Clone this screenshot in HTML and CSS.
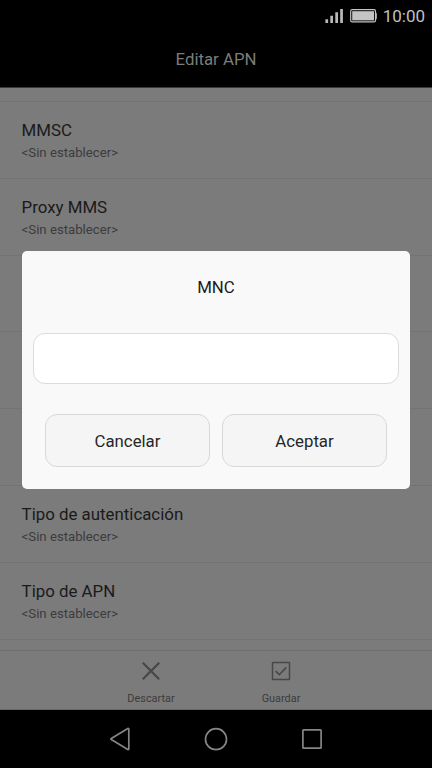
FILE: index.html
```html
<!DOCTYPE html>
<html lang="es">
<head>
<meta charset="utf-8">
<title>Editar APN</title>
<link rel="stylesheet" href="styles.css">
</head>
<body>
<div class="phone">
  <div class="statusbar">
    <svg class="signal" width="18" height="16" viewBox="0 0 18 16"><path d="M.4 11.200h2.700V15H.4zM5.300 7.800H8V15H5.300zM10.300 4.200H13V15h-2.700zM15.200 1h2.700v14h-2.700z"/></svg>
    <svg class="battery" width="28" height="14" viewBox="0 0 28 14"><rect x=".7" y=".7" width="24.800" height="12.200" rx="1.500" fill="none" stroke="#c4c4c4" stroke-width="1.200"/><rect x="2.200" y="2.200" width="21.800" height="9.200" fill="#c4c4c4"/><path d="M25.500 3.500q1.300 0 1.300 1.500v4q0 1.500-1.300 1.500z" fill="#c4c4c4"/></svg>
    <span class="clock">10:00</span>
  </div>
  <header class="header">Editar APN</header>
  <main class="list">
    <div class="row"><div class="name">MMSC</div><div class="value">&lt;Sin establecer&gt;</div></div>
    <div class="row"><div class="name">Proxy MMS</div><div class="value">&lt;Sin establecer&gt;</div></div>
    <div class="row"></div>
    <div class="row"></div>
    <div class="row"></div>
    <div class="row"><div class="name">Tipo de autenticación</div><div class="value">&lt;Sin establecer&gt;</div></div>
    <div class="row"><div class="name">Tipo de APN</div><div class="value">&lt;Sin establecer&gt;</div></div>
    <div class="row"></div>
  </main>
  <footer class="toolbar">
    <div class="action">
      <svg width="22" height="22" viewBox="0 0 22 22"><path d="M2.800 2.800l16.400 16.400M19.200 2.800L2.800 19.200" stroke-width="2.200"/></svg>
      <span>Descartar</span>
    </div>
    <div class="action">
      <svg width="22" height="22" viewBox="0 0 22 22"><rect x="2.500" y="2.500" width="17" height="17" rx=".6" stroke-width="1.500"/><path d="M5.600 11.200l3.700 3.500 7-7.300" stroke-width="1.600"/></svg>
      <span>Guardar</span>
    </div>
  </footer>
  <nav class="navbar">
    <svg width="24" height="24" viewBox="0 0 24 24"><path d="M20.800 2v20q-.2.900-1 .5L3.300 12.600q-.8-.6 0-1.200L19.800 1.500q.8-.4 1 .5z"/></svg>
    <svg width="24" height="24" viewBox="0 0 24 24"><circle cx="12" cy="12.200" r="10.500"/></svg>
    <svg width="24" height="24" viewBox="0 0 24 24"><rect x="2.900" y="2.900" width="18.200" height="18.200" rx=".7"/></svg>
  </nav>
  <div class="dialog">
    <h1 class="dialog-title">MNC</h1>
    <div class="field"></div>
    <div class="buttons">
      <button class="button">Cancelar</button>
      <button class="button">Aceptar</button>
    </div>
  </div>
</div>
</body>
</html>
```
FILE: styles.css
```css
* { box-sizing: border-box; }

body {
  margin: 0;
  background: #000;
  font-family: Roboto, "Liberation Sans", sans-serif;
}

.phone {
  position: relative;
  display: flex;
  flex-direction: column;
  width: 432px;
  height: 768px;
  overflow: hidden;
  background: #7b7b7b;
}

.statusbar {
  display: flex;
  align-items: center;
  justify-content: flex-end;
  flex: 0 0 31px;
  min-height: 0;
  padding-right: 7px;
  background: #000;
  color: #c0c0c0;
}

.signal { margin-right: 7px; fill: #b8b8b8; }
.battery { margin-right: 5px; }
.clock { padding-top: 1px; font-size: 17px; line-height: 30px; }

.header {
  flex: 0 0 56px;
  min-height: 0;
  background: #000;
  color: #7c7c7c;
  font-size: 16.8px;
  line-height: 57px;
  text-align: center;
}

.list {
  flex: 0 0 563px;
  overflow: hidden;
  padding-top: 13px;
  border-top: 1px solid #3b3939;
}

.row {
  height: 76.8px;
  padding: 17px 21.6px 0;
  border-top: 1px solid #737373;
}

.name {
  color: #1a1a1a;
  font-size: 16.85px;
  line-height: 22px;
}

.value {
  margin-top: 3px;
  color: #3c3c3c;
  font-size: 13.2px;
  line-height: 18px;
}

.toolbar {
  display: flex;
  justify-content: center;
  flex: 0 0 60px;
  border-top: 1px solid #6f6f6f;
  border-bottom: 1px solid #696969;
  background: #7b7b7b;
}

.action {
  display: flex;
  flex-direction: column;
  align-items: center;
  width: 130px;
  padding-top: 9px;
  color: #3c3c3c;
  font-size: 10.9px;
  line-height: 14px;
}

.action svg {
  margin-bottom: 10px;
  fill: none;
  stroke: #474747;
}

.navbar {
  display: flex;
  align-items: center;
  justify-content: center;
  gap: 72px;
  flex: 0 0 58px;
  background: #000;
}

.navbar svg {
  fill: none;
  stroke: #858585;
  stroke-width: 1.7;
}

.dialog {
  position: absolute;
  top: 251px;
  left: 21.6px;
  width: 388.8px;
  height: 238px;
  padding: 0 11.4px;
  border-radius: 5px;
  background: #f9f9f9;
}

.dialog-title {
  margin: 0;
  color: #1c1c1c;
  font-size: 16.8px;
  font-weight: 400;
  line-height: 73px;
  text-align: center;
}

.field {
  height: 51px;
  margin-top: 8.6px;
  border: 1px solid #dcdcdc;
  border-radius: 12px;
  background: #fff;
}

.buttons {
  display: flex;
  gap: 12px;
  padding: 30.4px 12px 0;
}

.button {
  flex: 1;
  height: 53.5px;
  padding: 0;
  border: 1px solid #d9d9d9;
  border-radius: 12px;
  background: #f5f5f5;
  color: #262626;
  font: 16.8px Roboto, "Liberation Sans", sans-serif;
}
```
